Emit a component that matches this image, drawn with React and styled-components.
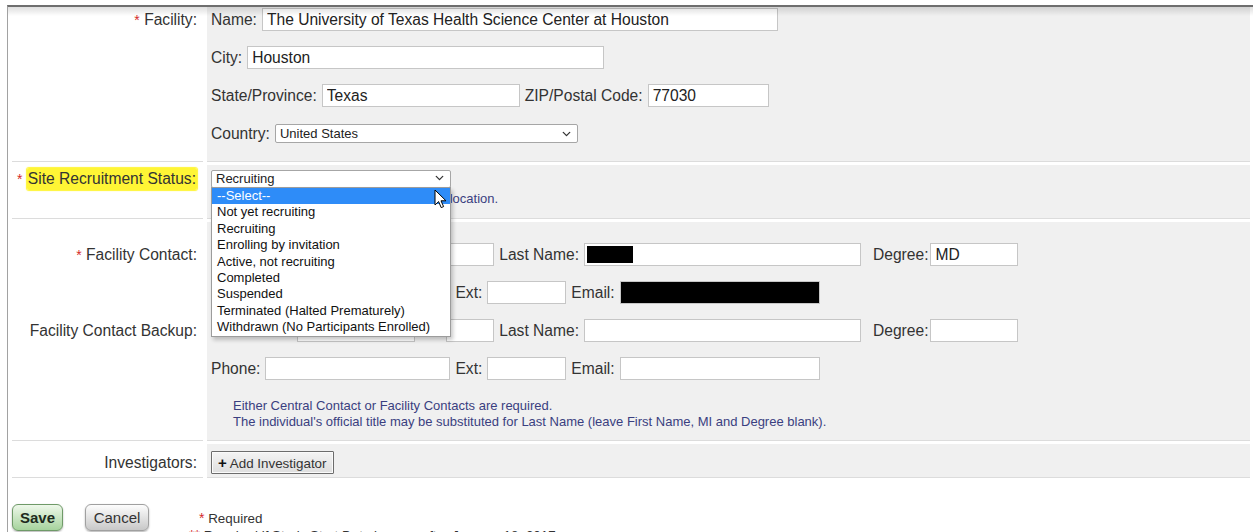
import React from "react";
import styled, { createGlobalStyle } from "styled-components";
import { ChevronDown } from "lucide-react";

const statusOptions = [
  "--Select--",
  "Not yet recruiting",
  "Recruiting",
  "Enrolling by invitation",
  "Active, not recruiting",
  "Completed",
  "Suspended",
  "Terminated (Halted Prematurely)",
  "Withdrawn (No Participants Enrolled)",
];

const ContactLine = ({ last, degree, redactLast }) => (
  <Line>
    <FieldLabel>First Name:</FieldLabel>
    <TextField $w={118} />
    <FieldLabel>MI:</FieldLabel>
    <TextField $w={48} />
    <FieldLabel>Last Name:</FieldLabel>
    {redactLast ? (
      <RedactedField $w={277}>
        <Redaction $w={46} />
      </RedactedField>
    ) : (
      <TextField $w={277} defaultValue={last} />
    )}
    <FieldLabel $extra={7}>Degree:</FieldLabel>
    <TextField $w={88} $shift={-3} defaultValue={degree} />
  </Line>
);

const PhoneLine = ({ redactEmail }) => (
  <Line>
    <FieldLabel>Phone:</FieldLabel>
    <TextField $w={185} />
    <FieldLabel>Ext:</FieldLabel>
    <TextField $w={79} />
    <FieldLabel>Email:</FieldLabel>
    {redactEmail ? (
      <RedactedField $w={200} $black />
    ) : (
      <TextField $w={200} />
    )}
  </Line>
);

const App = () => {
  return (
    <Page>
      <GlobalStyle />
      <Panel>
        <FormGrid>
          {/* facility address */}
          <LabelCell $top={1}>
            <LabelText>
              <Req>*</Req> Facility:
            </LabelText>
          </LabelCell>
          <ValueCell $pad="1px 4px 16px">
            <Line>
              <FieldLabel>Name:</FieldLabel>
              <TextField
                $w={516}
                defaultValue="The University of Texas Health Science Center at Houston"
              />
            </Line>
            <Line>
              <FieldLabel>City:</FieldLabel>
              <TextField $w={357} defaultValue="Houston" />
            </Line>
            <Line>
              <FieldLabel>State/Province:</FieldLabel>
              <TextField $w={198} defaultValue="Texas" />
              <FieldLabel>ZIP/Postal Code:</FieldLabel>
              <TextField $w={121} defaultValue="77030" />
            </Line>
            <Line>
              <FieldLabel>Country:</FieldLabel>
              <SelectWrap $w={303} $h={19}>
                <Select defaultValue="us">
                  <option value="us">United States</option>
                </Select>
                <Chevron size={13} strokeWidth={2.4} />
              </SelectWrap>
            </Line>
          </ValueCell>

          {/* recruitment status */}
          <LabelCell $top={5}>
            <LabelText $h={18}>
              <Req>*</Req> <Marker>Site Recruitment Status:</Marker>
            </LabelText>
          </LabelCell>
          <ValueCell $pad="4px 4px 11px">
            <SelectWrap $w={240} $h={18}>
              <Select defaultValue="Recruiting">
                {statusOptions.map((o) => (
                  <option key={o}>{o}</option>
                ))}
              </Select>
              <Chevron size={13} strokeWidth={2.4} />
              <Dropdown>
                {statusOptions.map((o, i) => (
                  <Option key={o} $active={i === 0}>
                    {o}
                  </Option>
                ))}
                <Cursor width="13" height="20" viewBox="0 0 13 20">
                  <path
                    d="M1 1 L1 16 L4.6 12.6 L7.2 18.6 L9.6 17.6 L7 11.8 L12 11.8 Z"
                    fill="#fff"
                    stroke="#000"
                    strokeWidth="1"
                    strokeLinejoin="round"
                  />
                </Cursor>
              </Dropdown>
            </SelectWrap>
            <Hint>Overall recruitment status at this facility's location.</Hint>
          </ValueCell>

          {/* contacts */}
          <LabelCell $top={21}>
            <LabelText>
              <Req>*</Req> Facility Contact:
            </LabelText>
            <LabelText $gap={53}>Facility Contact Backup:</LabelText>
          </LabelCell>
          <ValueCell $pad="21px 4px 10px">
            <ContactLine degree="MD" redactLast />
            <PhoneLine redactEmail />
            <ContactLine />
            <PhoneLine />
            <Note>
              Either Central Contact or Facility Contacts are required.
              <br />
              The individual's official title may be substituted for Last Name
              (leave First Name, MI and Degree blank).
            </Note>
          </ValueCell>

          {/* investigators */}
          <LabelCell $top={7}>
            <LabelText>Investigators:</LabelText>
          </LabelCell>
          <ValueCell $pad="7px 4px 3px">
            <AddButton>
              <b>+</b> Add Investigator
            </AddButton>
          </ValueCell>
        </FormGrid>

        <Footer>
          <SaveButton>Save</SaveButton>
          <CancelButton>Cancel</CancelButton>
          <Legend>
            <div>
              <Req>*</Req> Required
            </div>
            <div>
              <Req>**</Req> Required if Study Start Date is on or after January
              18, 2017
            </div>
          </Legend>
        </Footer>
      </Panel>
    </Page>
  );
};

export default App;

const GlobalStyle = createGlobalStyle`
  html, body {
    margin: 0;
    padding: 0;
    overflow: hidden;
    background: #fff;
  }
  body {
    font-family: "Liberation Sans", Arial, sans-serif;
    color: #333;
  }
`;

const Page = styled.div`
  padding: 5px 0 0 7px;
  width: 1246px;
`;

const Panel = styled.div`
  position: relative;
  border-top: 2px solid #6e6e6e;
  border-left: 1px solid #a2a2a2;
  min-height: 600px;
  &::after {
    content: "";
    position: absolute;
    top: 0;
    left: 0;
    right: 0;
    height: 9px;
    background: linear-gradient(rgba(0, 0, 0, 0.13), rgba(0, 0, 0, 0));
    pointer-events: none;
  }
`;

const FormGrid = styled.div`
  display: grid;
  grid-template-columns: 191px 1fr;
  column-gap: 4px;
  row-gap: 3px;
  padding: 0 3px 0 4px;
`;

const LabelCell = styled.div`
  display: flex;
  flex-direction: column;
  align-items: flex-end;
  padding: ${(p) => p.$top}px 6px 0 0;
  border-bottom: 1px solid #dcdcdc;
`;

const LabelText = styled.div`
  height: ${(p) => p.$h || 23}px;
  line-height: ${(p) => p.$h || 23}px;
  margin-top: ${(p) => p.$gap || 0}px;
  font-size: 15.6px;
  color: #333;
  white-space: nowrap;
`;

const Req = styled.span`
  color: #d42a2a;
  font-size: 14px;
`;

const Marker = styled.span`
  background: #fff535;
  padding: 2px 1px 3px;
  border-radius: 2px;
  box-shadow: 0 0 1px 1px #fff535;
`;

const ValueCell = styled.div`
  background: #f0f0f0;
  border-bottom: 1px solid #dcdcdc;
  padding: ${(p) => p.$pad};
  position: relative;
`;

const Line = styled.div`
  display: flex;
  align-items: center;
  gap: 5px;
  height: 23px;
  & + & {
    margin-top: 15px;
  }
`;

const FieldLabel = styled.span`
  font-size: 15.6px;
  color: #333;
  white-space: nowrap;
  margin-left: ${(p) => p.$extra || 0}px;
`;

const TextField = styled.input`
  box-sizing: border-box;
  width: ${(p) => p.$w}px;
  height: 23px;
  margin: 0 0 0 ${(p) => p.$shift || 0}px;
  padding: 0 4px;
  border: 1px solid #c6c6c6;
  border-radius: 0;
  background: #fff;
  font-family: "Liberation Sans", Arial, sans-serif;
  font-size: 15.6px;
  color: #222;
  outline: none;
`;

const RedactedField = styled.div`
  box-sizing: border-box;
  width: ${(p) => p.$w}px;
  height: 23px;
  padding: 2px;
  border: 1px solid #c6c6c6;
  background: ${(p) => (p.$black ? "#000" : "#fff")};
`;

const Redaction = styled.div`
  width: ${(p) => p.$w}px;
  height: 100%;
  background: #000;
`;

const SelectWrap = styled.div`
  position: relative;
  width: ${(p) => p.$w}px;
  height: ${(p) => p.$h}px;
`;

const Select = styled.select`
  appearance: none;
  box-sizing: border-box;
  width: 100%;
  height: 100%;
  margin: 0;
  padding: 0 20px 0 4px;
  border: 1px solid #a6a6a6;
  border-radius: 2px;
  background: #fff;
  font-family: "Liberation Sans", Arial, sans-serif;
  font-size: 13px;
  color: #222;
  outline: none;
`;

const Chevron = styled(ChevronDown)`
  position: absolute;
  right: 5px;
  top: 50%;
  transform: translateY(-50%);
  color: #333;
  pointer-events: none;
`;

const Dropdown = styled.div`
  position: absolute;
  top: 100%;
  left: 0;
  z-index: 5;
  box-sizing: border-box;
  width: 240px;
  background: #fff;
  border: 1px solid #9c9c9c;
  box-shadow: 2px 3px 4px rgba(0, 0, 0, 0.22);
`;

const Option = styled.div`
  height: 16.4px;
  line-height: 16.4px;
  padding: 0 5px;
  font-size: 13px;
  white-space: nowrap;
  color: ${(p) => (p.$active ? "#fff" : "#111")};
  background: ${(p) => (p.$active ? "#2e8cf8" : "transparent")};
`;

const Cursor = styled.svg`
  position: absolute;
  left: 222px;
  top: 1px;
`;

const Hint = styled.div`
  margin-top: 4px;
  line-height: 16px;
  font-size: 13px;
  color: #3a3f80;
`;

const Note = styled.div`
  margin: 18px 0 0 22px;
  line-height: 16px;
  font-size: 13px;
  color: #3a3f80;
`;

const AddButton = styled.button`
  box-sizing: border-box;
  height: 23px;
  padding: 0 6px;
  border: 1px solid #6c6c6c;
  border-radius: 1px;
  background: linear-gradient(#f4f4f4, #dedede);
  box-shadow: inset 0 0 0 1px #fafafa;
  font-family: "Liberation Sans", Arial, sans-serif;
  font-size: 13.4px;
  color: #333;
  b {
    font-size: 15px;
    color: #111;
  }
`;

const Footer = styled.div`
  display: flex;
  align-items: flex-start;
  margin-top: 26px;
  padding-left: 4px;
`;

const BaseButton = styled.button`
  box-sizing: border-box;
  height: 27px;
  border-radius: 6px;
  font-family: "Liberation Sans", Arial, sans-serif;
  font-size: 15px;
  box-shadow: 0 1px 2px rgba(0, 0, 0, 0.3);
`;

const SaveButton = styled(BaseButton)`
  width: 51px;
  border: 1px solid #6f9a68;
  background: linear-gradient(#eef8ea, #a6d39d);
  font-weight: bold;
  color: #1d2b1d;
`;

const CancelButton = styled(BaseButton)`
  width: 64px;
  margin-left: 22px;
  border: 1px solid #a0a0a0;
  background: linear-gradient(#fdfdfd, #c8c8c8);
  color: #333;
`;

const Legend = styled.div`
  margin: 6px 0 0 50px;
  font-size: 13.4px;
  line-height: 17px;
  color: #333;
  div + div {
    margin-left: -10px;
  }
`;
